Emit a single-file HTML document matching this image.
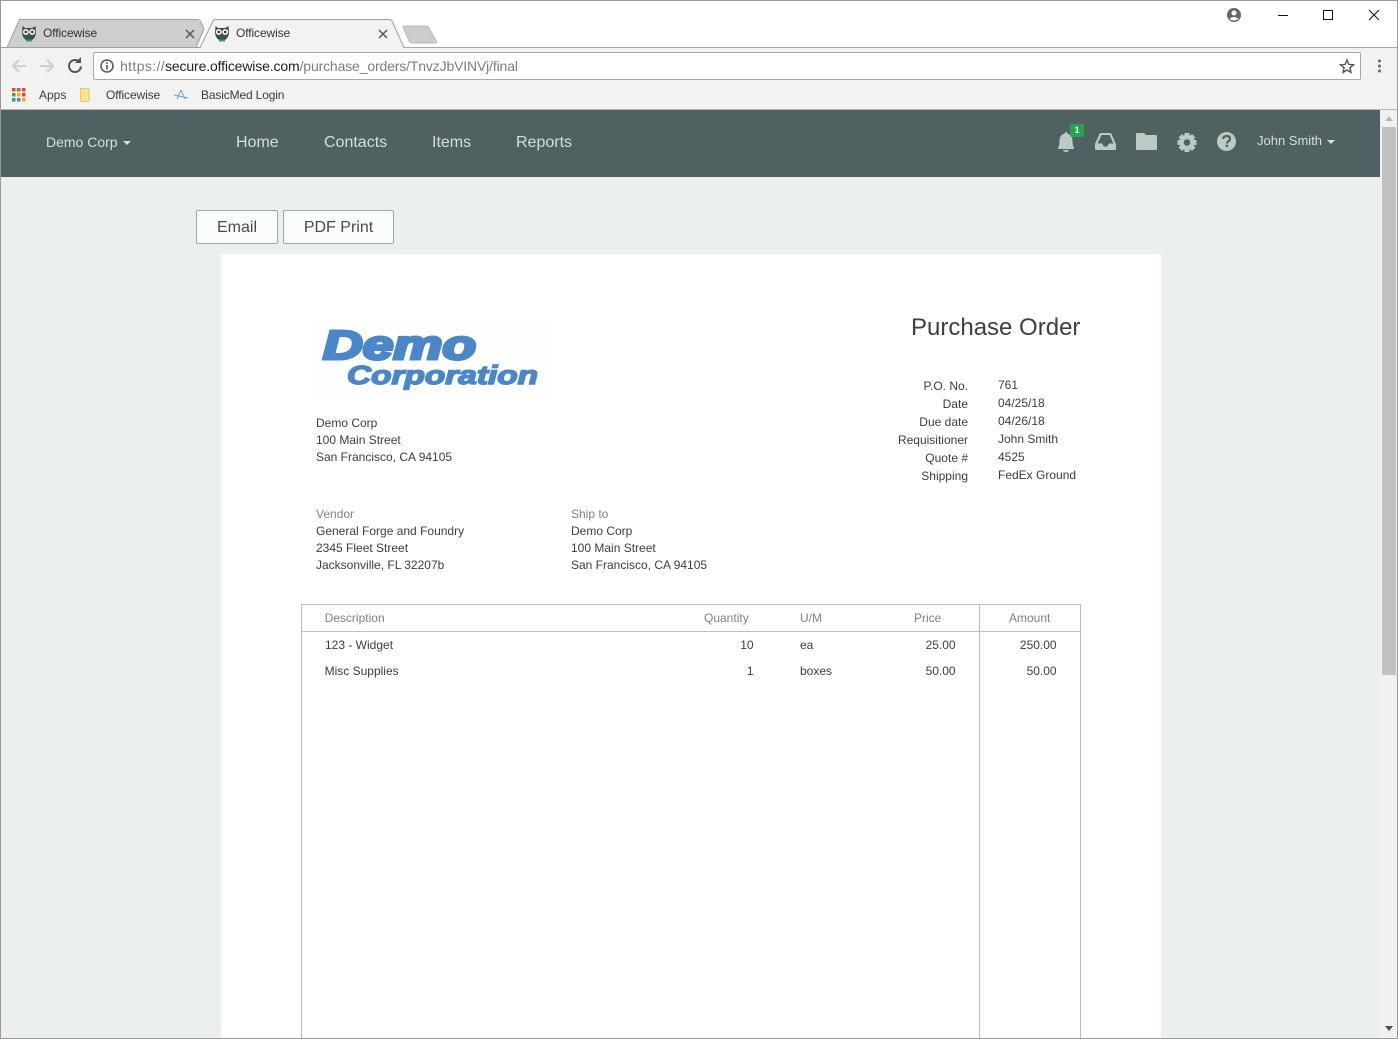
<!DOCTYPE html>
<html><head><meta charset="utf-8"><style>
html,body{margin:0;padding:0;width:1398px;height:1039px;overflow:hidden;background:#fff}
body{position:relative;font-family:"Liberation Sans",sans-serif}
.a{position:absolute}
.t{position:absolute;white-space:nowrap;font-size:12px;line-height:14px;color:#3c3c3c}
.g{color:#808080}
.r{text-align:right}
.nav{color:#d6dfdb;font-size:16px;line-height:20px}
.btn{position:absolute;box-sizing:border-box;height:34px;top:210px;border:1px solid #97adab;border-radius:2px;background:#fafcfb;color:#4a4a4a;font-size:16px;line-height:34px;text-align:center}
</style></head><body>
<!-- chrome -->
<div class="a" style="left:0;top:47px;width:1398px;height:63px;background:#f2f2f2"></div>
<svg class="a" style="left:0;top:0" width="460" height="50">
<path d="M7 47.5 L19.5 19.5 H197 Q200 19.5 201 22 L204 29 L196 47.5 Z" fill="#cecece" stroke="#a0a0a0"/>
<path d="M0 47.5 H200 L213 21 Q214 19.5 216 19.5 H388 Q391 19.5 392 21 L404 47.5 H460" fill="#f2f2f2" stroke="#a0a0a0"/>
<path d="M403 27 Q403 26 405 26 H426 Q428 26 429 28 L437 42 Q437 43 435 43 H412 Q410 43 409 41 Z" fill="#cdcdcd" stroke="#bbb"/>
<g><path d="M22.500 26 L25 28 H32 L35.500 26 L36 33 Q35 40 29 41 Q23 40 22 33 Z" fill="#3c4f4b"/><circle cx="25.800" cy="32" r="3" fill="#e8eeec"/><circle cx="32.200" cy="32" r="3" fill="#e8eeec"/><circle cx="25.800" cy="32" r="1.200" fill="#222"/><circle cx="32.200" cy="32" r="1.200" fill="#222"/><rect x="26" y="39.500" width="6" height="2" fill="#2fa55a"/></g>
<g transform="translate(193 0)"><path d="M22.500 26 L25 28 H32 L35.500 26 L36 33 Q35 40 29 41 Q23 40 22 33 Z" fill="#3c4f4b"/><circle cx="25.800" cy="32" r="3" fill="#e8eeec"/><circle cx="32.200" cy="32" r="3" fill="#e8eeec"/><circle cx="25.800" cy="32" r="1.200" fill="#222"/><circle cx="32.200" cy="32" r="1.200" fill="#222"/><rect x="26" y="39.500" width="6" height="2" fill="#2fa55a"/></g>
<path d="M186 30 L194 38 M194 30 L186 38 M379 30 L387 38 M387 30 L379 38" stroke="#555" stroke-width="1.5" fill="none"/>
</svg>
<div class="a" style="left:0;top:0;width:1398px;height:1px;background:#9a9a9a"></div>
<div class="a" style="left:0;top:0;width:1px;height:1039px;background:#9a9a9a;z-index:9"></div>
<div class="a" style="left:1397px;top:0;width:1px;height:1039px;background:#9a9a9a;z-index:9"></div>
<div class="a" style="left:0;top:1038px;width:1398px;height:1px;background:#9a9a9a;z-index:9"></div>
<div class="a" style="left:404px;top:47px;width:994px;height:1px;background:#a8a8a8"></div>
<div class="t" style="left:43px;top:26px;color:#333;letter-spacing:-.1px">Officewise</div>
<div class="t" style="left:236px;top:26px;color:#333;letter-spacing:-.1px">Officewise</div>
<svg class="a" style="left:1220px;top:5px" width="170" height="22">
<circle cx="14" cy="10" r="7" fill="#666"/><circle cx="14" cy="8" r="2.5" fill="#fff"/><path d="M9.5 14 Q14 10 18.500 14 Q14 17 9.500 14Z" fill="#fff"/>
<path d="M58 10.500 H68" stroke="#111" stroke-width="1"/>
<rect x="103.500" y="5.500" width="9" height="9" fill="none" stroke="#111"/>
<path d="M149 5 L159 15 M159 5 L149 15" stroke="#111" fill="none"/>
</svg>
<svg class="a" style="left:8px;top:54px" width="90" height="24">
<path d="M18 12 H5 M11 6 L5 12 L11 18" fill="none" stroke="#cfcfcf" stroke-width="2"/>
<path d="M32 12 H45 M39 6 L45 12 L39 18" fill="none" stroke="#cfcfcf" stroke-width="2"/>
<path d="M71.500 8 A6 6 0 1 0 73 12.500" fill="none" stroke="#555" stroke-width="2"/><path d="M67 9 H73 V3 Z" fill="#555"/>
</svg>
<div class="a" style="left:93px;top:52px;width:1268px;height:28px;box-sizing:border-box;background:#fff;border:1px solid #a9a9a9;border-radius:2px"></div>
<svg class="a" style="left:99px;top:58px" width="16" height="16"><circle cx="8" cy="8" r="6" fill="none" stroke="#555" stroke-width="1.500"/><rect x="7.200" y="7" width="1.600" height="4.500" fill="#555"/><rect x="7.200" y="4.300" width="1.600" height="1.600" fill="#555"/></svg>
<div class="t" style="left:120px;top:58px;font-size:14px;line-height:16px;color:#7d7d7d;letter-spacing:-.15px"><span style="letter-spacing:.375px">https://</span><span style="color:#222;letter-spacing:-.14px">secure.officewise.com</span>/purchase_orders/TnvzJbVINVj/final</div>
<svg class="a" style="left:1338px;top:57px" width="50" height="18">
<path d="M9 3 L10.800 7.400 L15.500 7.800 L11.900 10.800 L13 15.400 L9 13 L5 15.400 L6.100 10.800 L2.500 7.800 L7.200 7.400 Z" fill="none" stroke="#555" stroke-width="1.400"/>
<circle cx="41.500" cy="4" r="1.500" fill="#666"/><circle cx="41.500" cy="9" r="1.500" fill="#666"/><circle cx="41.500" cy="14" r="1.500" fill="#666"/>
</svg>
<svg class="a" style="left:10px;top:86px" width="180" height="18">
<g><rect x="2" y="2" width="3.500" height="3.500" fill="#e8453c"/><rect x="7" y="2" width="3.500" height="3.500" fill="#e8453c"/><rect x="12" y="2" width="3.500" height="3.500" fill="#e8453c"/>
<rect x="2" y="7" width="3.500" height="3.500" fill="#3aa757"/><rect x="7" y="7" width="3.500" height="3.500" fill="#f9ab00"/><rect x="12" y="7" width="3.500" height="3.500" fill="#e8453c"/>
<rect x="2" y="12" width="3.500" height="3.500" fill="#3aa757"/><rect x="7" y="12" width="3.500" height="3.500" fill="#4285f4"/><rect x="12" y="12" width="3.500" height="3.500" fill="#f9ab00"/></g>
<path d="M70.500 2.500 H79 V14 Q79 15.500 78 15.500 H71.500 Q70.500 15.500 70.500 14 Z" fill="#fde293" stroke="#f0c860"/>
<path d="M171 4 L167 13 M171 4 L175 13 M164 9 L178 12" stroke="#6aa5d8" stroke-width="1" fill="none"/>
</svg>
<div class="t" style="left:39px;top:88px">Apps</div>
<div class="t" style="left:106px;top:88px;letter-spacing:-.1px">Officewise</div>
<div class="t" style="left:201px;top:88px;letter-spacing:-.15px">BasicMed Login</div>
<div class="a" style="left:0;top:109px;width:1398px;height:1px;background:#b5b5b5"></div>

<!-- page -->
<div class="a" style="left:1px;top:110px;width:1380px;height:929px;background:#ebf0ec"></div>
<div class="a" style="left:1381px;top:110px;width:16px;height:929px;background:#f1f1f1"></div>
<div class="a" style="left:1382px;top:127px;width:14px;height:548px;background:#c1c1c1"></div>
<svg class="a" style="left:1381px;top:112px" width="16" height="12"><path d="M4 9 H12 L8 4 Z" fill="#b5b5b5"/></svg>
<svg class="a" style="left:1381px;top:1023px" width="16" height="12"><path d="M4 3 H12 L8 8 Z" fill="#505050"/></svg>

<div class="a" style="left:1px;top:110px;width:1379px;height:67px;background:#4f6160"></div>
<div class="t nav" style="left:46px;top:132px;font-size:14px">Demo Corp</div>
<svg class="a" style="left:123px;top:141px" width="9" height="5"><path d="M0 0 H8 L4 4 Z" fill="#d6dfdb"/></svg>
<div class="t nav" style="left:236px;top:133px">Home</div>
<div class="t nav" style="left:324px;top:133px">Contacts</div>
<div class="t nav" style="left:432px;top:133px">Items</div>
<div class="t nav" style="left:516px;top:133px">Reports</div>
<svg class="a" style="left:1050px;top:120px" width="200" height="36" fill="#bccac6">
<path d="M16 12 Q17.200 12 17.300 13.600 Q22.500 14.600 22.500 21 Q22.500 26 24 27.500 V29 H8 V27.500 Q9.500 26 9.500 21 Q9.500 14.600 14.700 13.600 Q14.800 12 16 12 Z"/>
<path d="M13 30 H19 Q18.500 32 16 32 Q13.500 32 13 30 Z"/>
<path fill-rule="evenodd" d="M50 13 H61 L66 24 V29 Q66 30 65 30 H46 Q45 30 45 29 V24 Z M51.500 15 L47.500 23.500 H52 L54 26.500 H57 L59 23.500 H63.500 L59.500 15 Z"/>
<path d="M86 14 Q86 13 87 13 H94 L96 15 H106 Q107 15 107 16 V29 Q107 30 106 30 H87 Q86 30 86 29 Z"/>
<g>
<rect x="134.500" y="13" width="5" height="19"/>
<rect x="134.500" y="13" width="5" height="19" transform="rotate(45 137 22.500)"/>
<rect x="134.500" y="13" width="5" height="19" transform="rotate(90 137 22.500)"/>
<rect x="134.500" y="13" width="5" height="19" transform="rotate(135 137 22.500)"/>
<circle cx="137" cy="22.500" r="7.500"/>
<circle cx="137" cy="22.500" r="3.300" fill="#4f6160"/>
</g>
<circle cx="176.500" cy="21.500" r="9.500"/>
<path d="M173 19 Q173.500 16 176.800 16 Q180 16 180 18.800 Q180 20.500 178 21.700 Q177 22.400 177 23.500" fill="none" stroke="#4f6160" stroke-width="2.200"/><rect x="175.700" y="24.700" width="2.400" height="2.400" fill="#4f6160"/>
</svg>
<div class="a" style="left:1070px;top:124px;width:14px;height:13px;background:#22a650;border-radius:2px;color:#fff;font-size:9px;font-weight:bold;line-height:13px;text-align:center">1</div>
<div class="t nav" style="left:1257px;top:131px;font-size:13px">John Smith</div>
<svg class="a" style="left:1327px;top:140px" width="9" height="5"><path d="M0 0 H8 L4 4 Z" fill="#d6dfdb"/></svg>

<div class="btn" style="left:196px;width:82px">Email</div>
<div class="btn" style="left:283px;width:111px">PDF Print</div>

<div class="a" style="left:221px;top:254px;width:940px;height:785px;background:#fff"></div>

<svg class="a" style="left:316px;top:318px" width="232" height="82">
<rect width="232" height="82" fill="#fefefe"/>
<text x="7" y="41" font-family="Liberation Sans" font-weight="bold" font-style="italic" font-size="41" textLength="153" lengthAdjust="spacingAndGlyphs" fill="#4a86c8" stroke="#4a86c8" stroke-width="3">Demo</text>
<text x="31" y="66" font-family="Liberation Sans" font-weight="bold" font-style="italic" font-size="26" textLength="191" lengthAdjust="spacingAndGlyphs" fill="#4a86c8" stroke="#4a86c8" stroke-width="1.500">Corporation</text>
</svg>

<div class="t" style="left:911px;top:313px;font-size:24px;line-height:30px;color:#3f3f3f">Purchase Order</div>

<div class="t" style="left:316px;top:416px">Demo Corp</div>
<div class="t" style="left:316px;top:433px">100 Main Street</div>
<div class="t" style="left:316px;top:450px">San Francisco, CA 94105</div>

<div class="t r" style="left:868px;width:100px;top:379px">P.O. No.</div>
<div class="t r" style="left:868px;width:100px;top:397px">Date</div>
<div class="t r" style="left:868px;width:100px;top:415px">Due date</div>
<div class="t r" style="left:868px;width:100px;top:433px">Requisitioner</div>
<div class="t r" style="left:868px;width:100px;top:451px">Quote #</div>
<div class="t r" style="left:868px;width:100px;top:469px">Shipping</div>
<div class="t" style="left:998px;top:378px">761</div>
<div class="t" style="left:998px;top:396px">04/25/18</div>
<div class="t" style="left:998px;top:414px">04/26/18</div>
<div class="t" style="left:998px;top:432px">John Smith</div>
<div class="t" style="left:998px;top:450px">4525</div>
<div class="t" style="left:998px;top:468px">FedEx Ground</div>

<div class="t g" style="left:316px;top:507px">Vendor</div>
<div class="t" style="left:316px;top:524px">General Forge and Foundry</div>
<div class="t" style="left:316px;top:541px">2345 Fleet Street</div>
<div class="t" style="left:316px;top:558px">Jacksonville, FL 32207b</div>
<div class="t g" style="left:571px;top:507px">Ship to</div>
<div class="t" style="left:571px;top:524px">Demo Corp</div>
<div class="t" style="left:571px;top:541px">100 Main Street</div>
<div class="t" style="left:571px;top:558px">San Francisco, CA 94105</div>

<div class="a" style="left:301px;top:604px;width:780px;height:434px;box-sizing:border-box;border:1px solid #bdbdbd;border-bottom:0"></div>
<div class="a" style="left:302px;top:631px;width:778px;height:1px;background:#bdbdbd"></div>
<div class="a" style="left:979px;top:605px;width:1px;height:433px;background:#bdbdbd"></div>

<div class="t g" style="left:324.600px;top:611px">Description</div>
<div class="t g" style="left:704px;top:611px">Quantity</div>
<div class="t g" style="left:800px;top:611px">U/M</div>
<div class="t g" style="left:914px;top:611px">Price</div>
<div class="t g" style="left:1009px;top:611px">Amount</div>

<div class="t" style="left:325px;top:638px">123 - Widget</div>
<div class="t r" style="left:700px;width:53.600px;top:638px">10</div>
<div class="t" style="left:800px;top:638px">ea</div>
<div class="t r" style="left:896px;width:59.600px;top:638px">25.00</div>
<div class="t r" style="left:997px;width:59.600px;top:638px">250.00</div>

<div class="t" style="left:324.600px;top:664px">Misc Supplies</div>
<div class="t r" style="left:700px;width:53.600px;top:664px">1</div>
<div class="t" style="left:800px;top:664px">boxes</div>
<div class="t r" style="left:896px;width:59.600px;top:664px">50.00</div>
<div class="t r" style="left:997px;width:59.600px;top:664px">50.00</div>
</body></html>
